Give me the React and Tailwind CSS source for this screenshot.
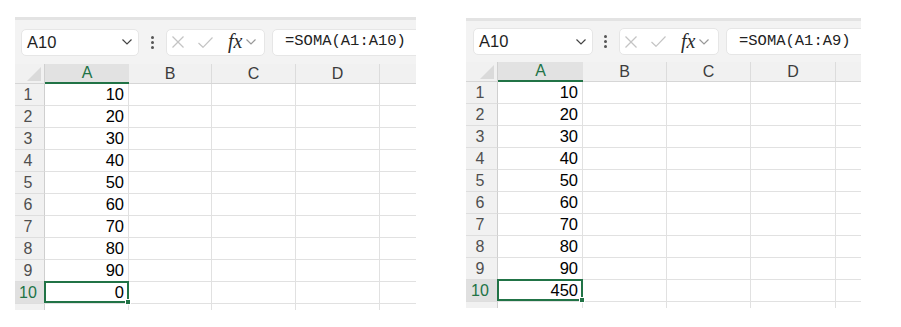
import React from "react";

const values = [10, 20, 30, 40, 50, 60, 70, 80, 90];

const Chevron = ({ className, stroke = "#444" }) => (
    <svg className={className} viewBox="0 0 10 6" fill="none">
        <polyline points="0.5,0.5 5,5 9.5,0.5" stroke={stroke} strokeWidth="1.2" />
    </svg>
);

const FormulaBar = ({ tb, nameW, dotsMl, fxW, formula }) => (
    <div className={`${tb} bg-[#f3f3f3] border-t-[3px] border-[#e3e3e3] flex items-center`}>
        <div className={`${nameW} h-[27px] shrink-0 bg-white rounded-[5px] border border-[#e6e6e6] flex items-center justify-between pl-[5px] pr-[6px]`}>
            <span className="text-[16.5px] text-[#1e1e1e] leading-none">A10</span>
            <Chevron className="w-[10px] h-[6px]" />
        </div>
        <div className={`${dotsMl} flex flex-col gap-[2px] shrink-0`}>
            <span className="w-[3px] h-[3px] bg-[#555] rounded-full" />
            <span className="w-[3px] h-[3px] bg-[#555] rounded-full" />
            <span className="w-[3px] h-[3px] bg-[#555] rounded-full" />
        </div>
        <div className={`ml-[12px] ${fxW} h-[27px] shrink-0 bg-white rounded-[5px] border border-[#e6e6e6] flex items-center pl-[5px]`}>
            <svg className="w-[12px] h-[12px]" viewBox="0 0 12 12" fill="none">
                <line x1="0.5" y1="0.5" x2="11.5" y2="11.5" stroke="#c4c4c4" strokeWidth="1.2" />
                <line x1="11.5" y1="0.5" x2="0.5" y2="11.5" stroke="#c4c4c4" strokeWidth="1.2" />
            </svg>
            <svg className="ml-[14px] w-[15px] h-[11px]" viewBox="0 0 15 11" fill="none">
                <polyline points="0.5,6 5,10.3 14.5,0.5" stroke="#c4c4c4" strokeWidth="1.2" />
            </svg>
            <span className="ml-[15px] text-[20px] italic text-[#2b2b2b] leading-none pb-[2px]" style={{ fontFamily: '"Liberation Serif", serif' }}>fx</span>
            <Chevron className="ml-[4px] w-[10px] h-[6px]" stroke="#999" />
        </div>
        <div className="ml-[7px] w-[220px] h-[27px] shrink-0 bg-white rounded-[5px] border border-[#e6e6e6] flex items-center pl-[12px]">
            <span className="text-[15.5px] text-[#222] leading-none" style={{ fontFamily: '"Liberation Mono", monospace' }}>{formula}</span>
        </div>
    </div>
);

const Grid = ({ rh, cols, result }) => {
    const [a, b, c, d] = cols;
    return (
        <div className="flex flex-col">
            <div className="h-[20px] flex bg-[#f1f1f1] border-b border-[#d6d6d6] text-[16px] text-[#3c3c3c]">
                <div className={`${rh} shrink-0 relative border-r border-[#d0d0d0]`}>
                    <svg className="absolute right-[3px] bottom-[2px] w-[14px] h-[14px]" viewBox="0 0 14 14">
                        <polygon points="14,0 14,14 0,14" fill="#dadada" />
                    </svg>
                </div>
                <div className={`${a} shrink-0 bg-[#e2e2e2] border-b-2 border-[#217346] text-[#217346] flex items-center justify-center leading-none -mb-[1px]`}>A</div>
                <div className={`${b} shrink-0 border-r border-[#dcdcdc] flex items-center justify-center leading-none`}>B</div>
                <div className={`${c} shrink-0 border-r border-[#dcdcdc] flex items-center justify-center leading-none`}>C</div>
                <div className={`${d} shrink-0 border-r border-[#dcdcdc] flex items-center justify-center leading-none`}>D</div>
                <div className="flex-1" />
            </div>
            {[...values, null].map((v, i) => {
                const last = i === 9;
                return (
                    <div key={i} className="h-[22px] flex">
                        <div className={`${rh} shrink-0 border-r border-b border-r-[#cfcfcf] border-b-[#dedede] flex items-center justify-center pr-[3px] text-[16px] leading-none ${last ? "bg-[#e0e0e0] text-[#217346]" : "bg-[#f1f1f1] text-[#4f4f4f]"}`}>
                            {i + 1}
                        </div>
                        <div className={`${a} shrink-0 relative border-r border-b border-[#e1e1e1] flex items-center justify-end pr-[4px] text-[16.5px] text-black leading-none`}>
                            {last ? result : v}
                            {last && (
                                <div className="absolute -left-[1px] -top-[1px] -right-[1px] bottom-0 border-2 border-[#217346]">
                                    <div className="absolute -right-[4px] -bottom-[4px] w-[6px] h-[6px] bg-[#217346] border border-white" />
                                </div>
                            )}
                        </div>
                        <div className={`${b} shrink-0 border-r border-b border-[#e1e1e1]`} />
                        <div className={`${c} shrink-0 border-r border-b border-[#e1e1e1]`} />
                        <div className={`${d} shrink-0 border-r border-b border-[#e1e1e1]`} />
                        <div className="flex-1 border-b border-[#e1e1e1]" />
                    </div>
                );
            })}
            <div className="h-[6px] flex">
                <div className={`${rh} shrink-0 bg-[#f1f1f1] border-r border-[#cfcfcf]`} />
                <div className={`${a} shrink-0 border-r border-[#e1e1e1]`} />
                <div className={`${b} shrink-0 border-r border-[#e1e1e1]`} />
                <div className={`${c} shrink-0 border-r border-[#e1e1e1]`} />
                <div className={`${d} shrink-0 border-r border-[#e1e1e1]`} />
                <div className="flex-1" />
            </div>
        </div>
    );
};

export default function App() {
    return (
        <div className="w-[901px] h-[327px] bg-white flex items-start overflow-hidden" style={{ fontFamily: '"Liberation Sans", Arial, sans-serif' }}>
            <div className="ml-[15px] mt-[17px] w-[401px] shrink-0 overflow-hidden">
                <FormulaBar tb="h-[47px] pl-[6px]" nameW="w-[118px]" dotsMl="ml-[12px]" fxW="w-[99px]" formula="=SOMA(A1:A10)" />
                <Grid rh="w-[30px]" cols={["w-[84px]", "w-[83px]", "w-[84px]", "w-[84px]"]} result="0" />
            </div>
            <div className="ml-[50px] mt-[18px] w-[395px] shrink-0 overflow-hidden">
                <FormulaBar tb="h-[44px] pl-[7px]" nameW="w-[120px]" dotsMl="ml-[11px]" fxW="w-[100px]" formula="=SOMA(A1:A9)" />
                <Grid rh="w-[32px]" cols={["w-[85px]", "w-[84px]", "w-[84px]", "w-[85px]"]} result="450" />
            </div>
        </div>
    );
}
